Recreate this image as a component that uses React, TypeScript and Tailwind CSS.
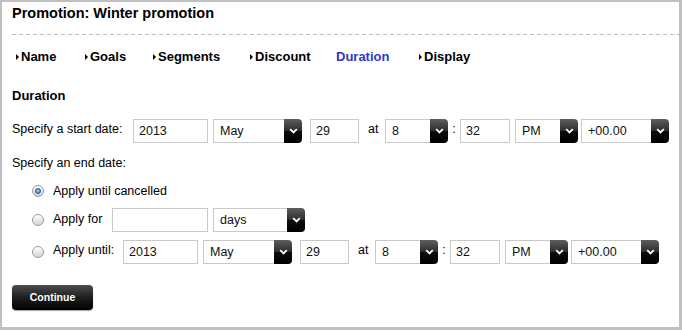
import React from "react";

type BoxProps = { w: number; value: string };

function TextBox({ w, value }: BoxProps) {
  return (
    <input
      readOnly
      value={value}
      style={{ width: w }}
      className="h-[24px] border border-[#c9c9c9] bg-white px-[5px] text-[12.5px] text-[#111] outline-none"
    />
  );
}

function SelectBox({ w, value }: BoxProps) {
  return (
    <div style={{ width: w }} className="flex h-[24px] shrink-0">
      <div className="flex flex-1 items-center border-y border-l border-[#c9c9c9] bg-white pl-[6px] text-[12.5px] text-[#111]">
        {value}
      </div>
      <div className="flex w-[18px] items-center justify-center rounded-r-[4px] bg-[linear-gradient(#5e5e5e,#2e2e2e_48%,#0c0c0c_52%,#000)]">
        <svg width="9" height="6" viewBox="0 0 9 6">
          <path d="M1.2 1.2 L4.5 4.4 L7.8 1.2" fill="none" stroke="#fff" strokeWidth="1.8" />
        </svg>
      </div>
    </div>
  );
}

function DateTime() {
  return (
    <div className="flex items-center">
      <TextBox w={75} value="2013" />
      <div className="ml-[5px]">
        <SelectBox w={89} value="May" />
      </div>
      <div className="ml-[8px]">
        <TextBox w={49} value="29" />
      </div>
      <span className="ml-[9px] w-[17px] pb-[3px]">at</span>
      <SelectBox w={63} value="8" />
      <span className="w-[12px] pb-[3px] text-center">:</span>
      <TextBox w={50} value="32" />
      <div className="ml-[5px]">
        <SelectBox w={63} value="PM" />
      </div>
      <div className="ml-[3px]">
        <SelectBox w={88} value="+00.00" />
      </div>
    </div>
  );
}

function Radio({ checked }: { checked?: boolean }) {
  return (
    <span className="flex h-[12px] w-[12px] shrink-0 items-center justify-center rounded-full border border-[#9a9a9a] bg-[linear-gradient(#ffffff,#d4d4d4)]">
      {checked && (
        <span className="h-[6px] w-[6px] rounded-full border border-[#1d4f99] bg-[radial-gradient(circle_at_40%_35%,#9fd2ff,#2f7de0)]" />
      )}
    </span>
  );
}

const tabs = [
  { name: "Name", w: 69, arrow: true },
  { name: "Goals", w: 68, arrow: true },
  { name: "Segments", w: 97, arrow: true },
  { name: "Discount", w: 86, arrow: true },
  { name: "Duration", w: 83, arrow: false },
  { name: "Display", w: 80, arrow: true },
];

export default function App() {
  return (
    <div className="h-[330px] w-[682px] border-l-2 border-t-2 border-r-[3px] border-b-[3px] border-[#c0c0c0] bg-white font-['Liberation_Sans',Arial,sans-serif] text-[12.5px] text-black">
      <div className="relative ml-[10px] h-[32px] pt-[2px]">
        <h1 className="text-[14.5px] leading-[18px] font-bold">Promotion: Winter promotion</h1>
        <div className="absolute bottom-[-1px] left-0 right-0 h-px bg-[repeating-linear-gradient(to_right,#bdbdbd_0_4px,transparent_4px_7px)]" />
      </div>

      <div className="mt-[15px] ml-[14px] flex h-[16px] items-center text-[13px] leading-[16px] font-bold">
        {tabs.map((t) => (
          <div key={t.name} style={{ width: t.w }} className="flex items-center">
            {t.arrow && (
              <span className="mr-[2px] inline-block h-0 w-0 border-y-[3px] border-l-[3px] border-y-transparent border-l-black" />
            )}
            <span className={t.arrow ? "" : "text-[#3535c8]"}>{t.name}</span>
          </div>
        ))}
      </div>

      <div className="pl-[10px]">
        <h2 className="mt-[23px] text-[13px] leading-[16px] font-bold">Duration</h2>

        <div className="mt-[15px] flex h-[24px] items-center">
          <span className="w-[121px] pb-[3px]">Specify a start date:</span>
          <DateTime />
        </div>

        <div className="mt-[12px] leading-[16px]">Specify an end date:</div>

        <div className="pl-[20px]">
          <div className="mt-[12px] flex h-[16px] items-center">
            <Radio checked />
            <span className="ml-[9px]">Apply until cancelled</span>
          </div>

          <div className="mt-[9px] flex h-[24px] items-center">
            <Radio />
            <span className="ml-[9px] w-[59px] pb-[2px]">Apply for</span>
            <TextBox w={96} value="" />
            <div className="ml-[5px]">
              <SelectBox w={92} value="days" />
            </div>
          </div>

          <div className="mt-[8px] flex h-[24px] items-center">
            <Radio />
            <span className="ml-[9px] w-[70px] pb-[3px]">Apply until:</span>
            <DateTime />
          </div>
        </div>

        <button className="mt-[21px] h-[25px] w-[81px] rounded-[4px] bg-[linear-gradient(#4d4d4d,#1e1e1e_50%,#000)] text-[10.5px] font-bold text-white shadow-[0_1px_1px_rgba(0,0,0,0.35)]">
          Continue
        </button>
      </div>
    </div>
  );
}
